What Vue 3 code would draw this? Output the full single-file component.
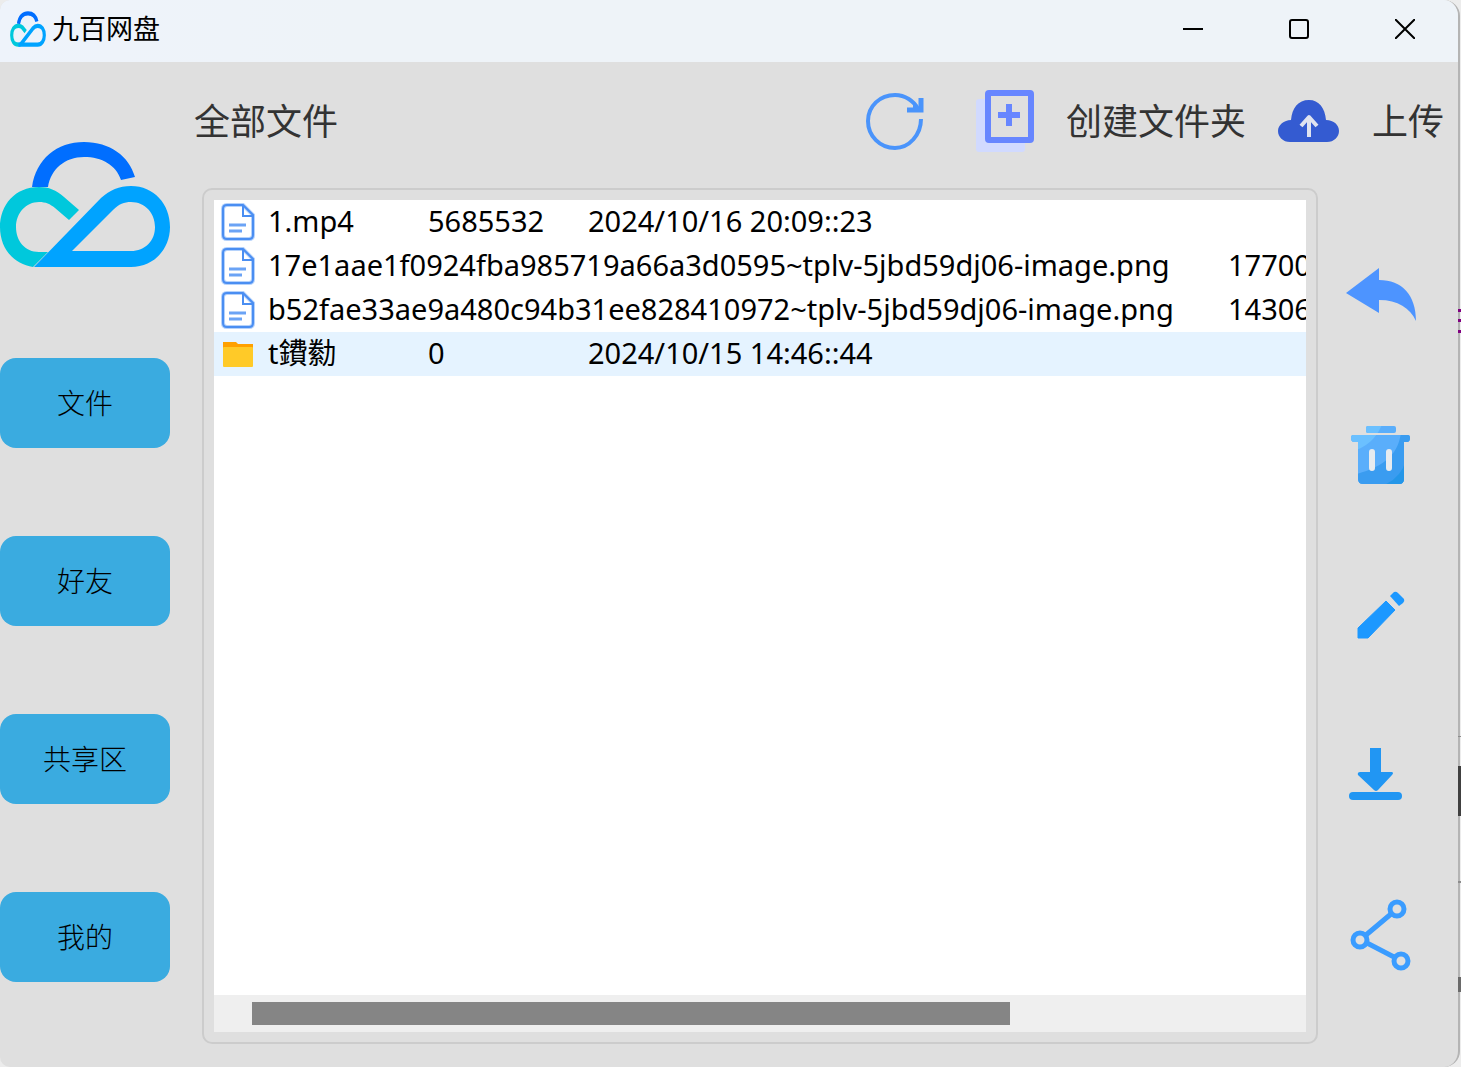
<script setup>
import { ref, computed } from 'vue'

const navItems = ['文件', '好友', '共享区', '我的']
const activeNav = ref('文件')

const files = [
  { kind: 'file', text: '1.mp4\t5685532\t2024/10/16 20:09::23' },
  { kind: 'file', text: '17e1aae1f0924fba985719a66a3d0595~tplv-5jbd59dj06-image.png\t17700' },
  { kind: 'file', text: 'b52fae33ae9a480c94b31ee828410972~tplv-5jbd59dj06-image.png\t14306' },
  { kind: 'folder', text: 't鐨勬\t0\t2024/10/15 14:46::44' },
]
const selected = ref(3)

const visibleWidth = 1092
const contentWidth = 1464
const thumbWidth = computed(() => (visibleWidth / contentWidth) * 100 + '%')
</script>

<template>
  <div class="desktop">
    <div class="window">
      <header class="titlebar">
        <svg class="app-icon" viewBox="0 0 170 126" preserveAspectRatio="none" aria-hidden="true">
          <path d="M40 45C44 20 62 8 85 8C106 8 122 18 127 37" fill="none" stroke="#006eff" stroke-width="15" />
          <path d="M74 72L59 58C52 53 46 52 39 52C20 52 8 66 8 85C8 105 20 118 39 118H50" fill="none" stroke="#00c8dc" stroke-width="15" />
          <path d="M40 118H131C150 118 162 103 162 85C162 66 150 52 131 52C121 52 114 56 107 62L49 118" fill="none" stroke="#00a3ff" stroke-width="15" />
        </svg>
        <h1>九百网盘</h1>
        <div class="caption">
          <button type="button" aria-label="最小化">
            <svg viewBox="0 0 20 20"><path d="M0 10H20" /></svg>
          </button>
          <button type="button" aria-label="最大化">
            <svg viewBox="0 0 20 20"><rect x="1" y="1" width="18" height="18" rx="2" /></svg>
          </button>
          <button type="button" aria-label="关闭">
            <svg viewBox="0 0 20 20"><path d="M0 0L20 20M20 0L0 20" /></svg>
          </button>
        </div>
      </header>

      <div class="body">
        <nav class="sidebar">
          <svg class="logo" viewBox="0 0 170 126" preserveAspectRatio="xMidYMin" aria-hidden="true">
            <path d="M32 45C36 17 57 0 84 0C110 0 129 14 135 35L121 38C116 23 102 15 84 15C65 15 51 27 48 45Z" fill="#006eff" />
            <path d="M69 78L79 68L64 55C56 48 49 45 39 45C15 45 0 63 0 85C0 107 14 122 33 125L48 110H39C25 110 16 99 16 85C16 71 26 60 39 60C46 60 50 62 55 66Z" fill="#00c8dc" />
            <path fill-rule="evenodd" d="M34 125H131C154 125 170 107 170 85C170 62 154 44 131 44C119 44 110 48 101 56ZM72 109L113 68C119 62 124 60 131 60C145 60 155 71 155 85C155 99 145 109 131 109Z" fill="#00a3ff" />
          </svg>
          <button
            v-for="item in navItems"
            :key="item"
            type="button"
            class="nav-button"
            @click="activeNav = item"
          >{{ item }}</button>
        </nav>

        <main class="main">
          <div class="toolbar">
            <h2>全部文件</h2>
            <button type="button" class="tool refresh" aria-label="刷新">
              <svg width="58" height="58" viewBox="0 0 58 58" fill="none" stroke="#4a94fb" stroke-width="4">
                <path d="M55 27C55 43 43 56 29 56C14 56 2 44 2 29C2 14 14 3 29 3C39 3 48 9 52 17" />
                <path d="M55 6V18H41" stroke-width="5" />
                <path d="M47 11V17H55Z" fill="#4a94fb" stroke="none" />
              </svg>
            </button>
            <button type="button" class="tool">
              <svg width="58" height="62" viewBox="0 0 58 62">
                <rect x="0" y="9" width="49" height="53" rx="3" fill="#d1daff" />
                <rect x="12" y="3" width="43" height="47" rx="1" fill="#dfdfdf" stroke="#6786ff" stroke-width="6" stroke-linejoin="round" />
                <path d="M33 14V36M22 25H44" stroke="#6786ff" stroke-width="6" />
              </svg>
              <span>创建文件夹</span>
            </button>
            <button type="button" class="tool">
              <svg width="62" height="42" viewBox="0 0 62 42">
                <path d="M12 42C5 42 0 37 0 31C0 25 6 20 13 20C14 8 20 0 31 0C41 0 47 8 48 20C56 20 61 25 61 31C61 37 56 42 49 42Z" fill="#345bd1" />
                <path d="M31 37V18M23 26L31 17L39 26" fill="none" stroke="#dfe3f0" stroke-width="4" stroke-linejoin="round" />
              </svg>
              <span>上传</span>
            </button>
          </div>

          <div class="content">
            <section class="panel">
              <ul class="files">
                <li
                  v-for="(f, i) in files"
                  :key="i"
                  :class="{ selected: i === selected }"
                  @click="selected = i"
                >
                  <svg v-if="f.kind === 'file'" width="36" height="38" viewBox="0 0 36 38">
                    <path d="M7 2H23L33 12V32Q33 36 29 36H7Q3 36 3 32V6Q3 2 7 2Z" fill="#fff" stroke="#b5d2fb" stroke-width="4" />
                    <path d="M7 2H23L33 12V32Q33 36 29 36H7Q3 36 3 32V6Q3 2 7 2Z" fill="none" stroke="#4a8ef2" stroke-width="2" />
                    <path d="M23 2V13H33" fill="none" stroke="#4a8ef2" stroke-width="2" />
                    <path d="M9 22H26M9 28H22" stroke="#6ba3f5" stroke-width="3" />
                  </svg>
                  <svg v-else width="36" height="38" viewBox="0 0 36 38">
                    <path d="M3 7H16L18 9H33V20H3Z" fill="#ffa000" />
                    <rect x="3" y="12" width="30" height="20" rx="1" fill="#ffca28" />
                  </svg>
                  <span>{{ f.text }}</span>
                </li>
              </ul>
              <div class="scrollbar"><div class="thumb" :style="{ width: thumbWidth }"></div></div>
            </section>

            <aside class="rail">
              <button type="button" aria-label="返回">
                <svg viewBox="0 0 80 80">
                  <path d="M6 38L39 13V25C62 25 76 40 76 66C70 53 58 45 39 45V58Z" fill="#4d94ff" />
                </svg>
              </button>
              <button type="button" aria-label="删除">
                <svg viewBox="0 0 80 80">
                  <defs>
                    <clipPath id="bin">
                      <path d="M28 11H54Q56 11 56 13V16Q56 18 54 18H28Q26 18 26 16V13Q26 11 28 11ZM13 20H68Q70 20 70 23Q70 27 67 27H64V64Q64 69 59 69H23Q18 69 18 64V27H14Q11 27 11 23Q11 20 13 20Z" />
                    </clipPath>
                  </defs>
                  <g clip-path="url(#bin)">
                    <rect width="80" height="80" fill="#5aaefb" />
                    <path d="M0 0H45Q38 30 10 37Z" fill="#6bc0ff" />
                    <path d="M80 17H61C58 43 40 53 10 61V80H80Z" fill="#3a9cf0" />
                    <path d="M80 45H66Q61 63 44 70H80Z" fill="#2496e8" />
                  </g>
                  <path d="M32 37V53M49 37V53" stroke="#e7ebef" stroke-width="6" stroke-linecap="round" />
                </svg>
              </button>
              <button type="button" aria-label="重命名">
                <svg viewBox="0 0 80 80" fill="#1c98ff">
                  <path d="M18 63V53L46 26L55 35L28 63Z" stroke="#1c98ff" stroke-linejoin="round" />
                  <path d="M50 21L54 17Q56 16 58 18L64 24Q65 26 63 28L59 31Z" />
                </svg>
              </button>
              <button type="button" aria-label="下载">
                <svg viewBox="0 0 80 80" fill="#2196f3">
                  <path d="M30 13H41V37H52Q54 38 52 40L38 55Q36 57 34 55L18 40Q17 37 20 37H30Z" />
                  <rect x="9" y="57" width="53" height="8" rx="4" />
                </svg>
              </button>
              <button type="button" aria-label="分享">
                <svg viewBox="0 0 80 80" fill="none" stroke="#3a9cff" stroke-width="5">
                  <circle cx="57" cy="14" r="7" />
                  <circle cx="20" cy="45" r="7" />
                  <circle cx="61" cy="66" r="7" />
                  <path d="M26 40L51 19M27 48L54 62" />
                </svg>
              </button>
            </aside>
          </div>
        </main>
      </div>
    </div>
    <div class="behind" aria-hidden="true"></div>
  </div>
</template>

<style>
body {
  margin: 0;
  background: #ececec;
}
</style>

<style scoped>
* {
  box-sizing: border-box;
}

button {
  border: 0;
  padding: 0;
  background: none;
  color: inherit;
  font: inherit;
  cursor: pointer;
}

svg {
  display: block;
  flex: none;
}

.desktop {
  position: relative;
  min-height: 100vh;
  display: flex;
  padding-right: 1px;
  font-family: "Noto Sans", "Noto Sans CJK SC", sans-serif;
}

.window {
  flex: 1;
  min-width: 0;
  display: flex;
  flex-direction: column;
  background: #dfdfdf;
  border-right: 2px solid #b4b4b4;
  border-radius: 10px 16px 16px 10px;
  overflow: hidden;
}

.titlebar {
  height: 62px;
  display: flex;
  align-items: center;
  padding: 0 0 4px 10px;
  background: linear-gradient(90deg, #eef3fb, #eef3f8 24%);
  color: #000;
}

.app-icon {
  width: 36px;
  height: 36px;
}

h1 {
  margin: 0 0 0 6px;
  font-size: 27px;
  font-weight: 400;
  line-height: 40px;
}

.caption {
  display: flex;
  margin-left: auto;
  align-self: stretch;
}

.caption button {
  width: 106px;
  height: 58px;
  display: flex;
  align-items: center;
  justify-content: center;
}

.caption svg {
  width: 20px;
  height: 20px;
  fill: none;
  stroke: #000;
  stroke-width: 2;
}

.body {
  flex: 1;
  display: flex;
}

.sidebar {
  width: 170px;
  flex: none;
  display: flex;
  flex-direction: column;
  gap: 88px;
  padding-top: 80px;
}

.logo {
  width: 170px;
  height: 128px;
}

.nav-button {
  height: 90px;
  padding-bottom: 2px;
  border-radius: 16px;
  background: #3aabe0;
  color: #000;
  font-family: "Noto Sans CJK SC", sans-serif;
  font-size: 28px;
  font-weight: 300;
}

.main {
  flex: 1;
  min-width: 0;
  display: flex;
  flex-direction: column;
  padding-left: 24px;
}

.toolbar {
  height: 118px;
  flex: none;
  display: flex;
  align-items: center;
  gap: 32px;
  padding-right: 14px;
  color: #333;
  font-family: "Noto Sans CJK SC", sans-serif;
  font-size: 36px;
  font-weight: 400;
  line-height: 52px;
}

h2 {
  margin: 0;
  font: inherit;
}

h2,
.tool span {
  padding-bottom: 4px;
}

.tool {
  display: flex;
  align-items: center;
  gap: 32px;
}

.refresh {
  margin-left: auto;
  margin-right: 20px;
}

.content {
  flex: 1;
  display: flex;
  padding: 8px 0 23px 8px;
}

.panel {
  flex: 1;
  min-width: 0;
  display: flex;
  flex-direction: column;
  padding: 10px;
  border: 2px solid #cccccc;
  border-radius: 10px;
}

.files {
  flex: 1;
  margin: 0;
  padding: 0;
  list-style: none;
  background: #fff;
  color: #000;
  font-size: 29px;
  line-height: 42px;
  overflow: hidden;
}

.files li {
  height: 44px;
  display: flex;
  align-items: center;
  gap: 12px;
  padding-left: 6px;
}

.files li.selected {
  background: #e5f3ff;
}

.files span {
  padding-bottom: 2px;
  white-space: pre;
  tab-size: 160px;
}

.scrollbar {
  height: 37px;
  padding: 7px 38px;
  background: #efefef;
}

.thumb {
  height: 23px;
  background: #858585;
}

.rail {
  width: 140px;
  flex: none;
  display: flex;
  flex-direction: column;
  align-items: flex-start;
  gap: 80px;
  padding: 67px 0 0 22px;
}

.rail button,
.rail svg {
  width: 80px;
  height: 80px;
}

.behind {
  position: absolute;
  top: 0;
  right: 0;
  width: 3px;
  height: 100%;
  background:
    linear-gradient(#800080, #800080) 0 309px / 3px 3px no-repeat,
    linear-gradient(#800080, #800080) 0 319px / 3px 3px no-repeat,
    linear-gradient(#800080, #800080) 0 330px / 3px 3px no-repeat,
    linear-gradient(#8c8c8c, #8c8c8c) 0 736px / 3px 1px no-repeat,
    linear-gradient(#404040, #404040) 0 766px / 3px 50px no-repeat,
    linear-gradient(#8c8c8c, #8c8c8c) 0 881px / 3px 2px no-repeat,
    linear-gradient(#6a6a6a, #6a6a6a) 0 977px / 3px 15px no-repeat;
}
</style>
